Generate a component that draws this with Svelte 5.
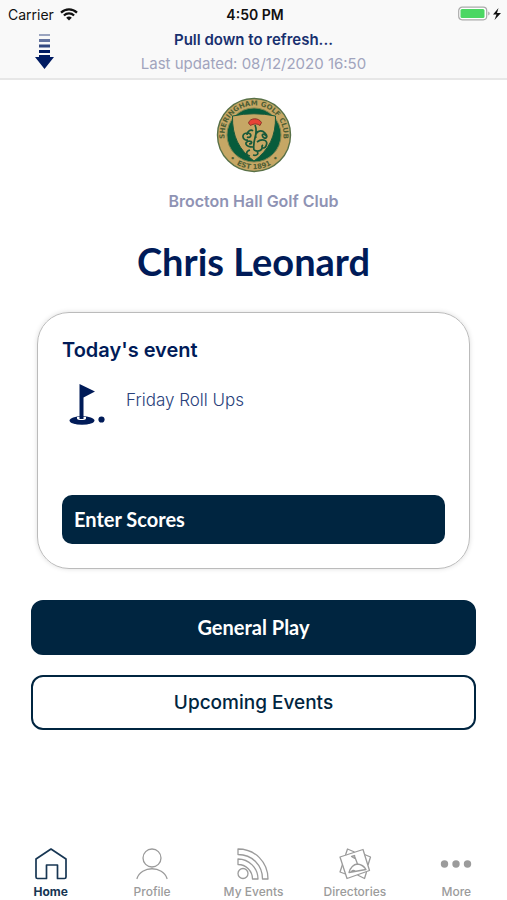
<script>
  const tabs = ['Home', 'Profile', 'My Events', 'Directories', 'More'];
  let active = $state('Home');
</script>

<div class="app">
  <header>
    <div class="status">
      <div class="carrier">
        <span>Carrier</span>
        <svg width="18" height="13" viewBox="0 0 18 13" fill="none" stroke="#111" stroke-width="2.2" aria-hidden="true">
          <path d="M1 4.6C5.5.2 12.5.2 17 4.6M3.9 7.5c2.900-2.900 7.300-2.900 10.200 0" />
          <path d="M9 12.600 6.200 9.800c1.600-1.600 4-1.600 5.600 0Z" fill="#111" stroke="none" />
        </svg>
      </div>
      <strong>4:50 PM</strong>
      <div class="power">
        <svg width="44" height="16" viewBox="0 0 44 16" aria-hidden="true">
          <rect x=".7" y="1.2" width="28" height="12.6" rx="3.5" fill="#fff" stroke="#aaa" stroke-width="1.2" />
          <rect x="2.5" y="3" width="24" height="9" rx="1.5" fill="#4bd763" />
          <path d="M30.2 5.5v4c2-.7 2-3.300 0-4Z" fill="#aaa" />
          <path d="m40.500 2-5.500 6.500h3.500L36.500 14 43 7h-4Z" fill="#111" />
        </svg>
      </div>
    </div>
    <div class="refresh">
      <svg class="arrow" width="20" height="37" viewBox="0 0 20 37" fill="#001b62" aria-hidden="true">
        <path d="M5 1h11v2H5Z" opacity=".38" />
        <path d="M5 6h11v3H5Z" opacity=".6" />
        <path d="M5 11.500h11v3H5Z" opacity=".8" />
        <path d="M5 17h11v3H5Z" />
        <path d="M5 22h11v2h4L10.500 36 1 24h4Z" />
      </svg>
      <div class="messages">
        <p class="pull">Pull down to refresh...</p>
        <p class="updated">Last updated: 08/12/2020 16:50</p>
      </div>
    </div>
  </header>

  <main>
    <svg class="crest" width="76" height="76" viewBox="0 0 76 76" role="img" aria-label="Sheringham Golf Club, est. 1891">
      <defs>
        <path id="ring-top" d="M17.100 58.900A29.500 29.500 0 1 1 58.900 58.900" />
        <path id="ring-bottom" d="M5.600 48.500A34 34 0 0 0 70.400 48.500" />
      </defs>
      <circle cx="38" cy="38" r="36.500" fill="#c6a765" stroke="#587047" stroke-width="1.400" />
      <circle cx="38" cy="38" r="27" fill="#075c3c" stroke="#7d8450" />
      <text><textPath href="#ring-top" startOffset="50%" text-anchor="middle">SHERINGHAM GOLF CLUB</textPath></text>
      <text><textPath href="#ring-bottom" startOffset="50%" text-anchor="middle">•  EST 1891  •</textPath></text>
      <path d="M16.500 19Q38 14.500 59.500 19C60 39 53 53 38 64 23 53 16 39 16.500 19Z" fill="#c6a765" stroke="#17593b" />
      <path d="M32.500 26c1-5 10-6 13-.5l-1.500 3c-3-2-6-2-9.500 0Z" fill="#e84236" stroke="#8a3928" />
      <path d="M39 28c4 9-3 14-1 25M37 50c-8 0-9-5-4-6 4 0 3 3 0 3M32 43c-6 1-7-7-1-7s4 6 0 4M39 42c0-8 6-10 10-6s0 7-2 4 1-4 3-1M41 45c5-4 12-2 9 4-2 4-6 1-3-1M38 53c4 2 9 1 8-4M34 53c-4 1-5 5 0 6M31 38c0-4 4-6 6-4M44 34c-4 0-5 4-4 7M37 58c4 1 6-1 4-4" fill="none" stroke="#17593b" stroke-width="1.700" />
    </svg>
    <p class="club">Brocton Hall Golf Club</p>
    <h1>Chris Leonard</h1>

    <section class="card">
      <h2>Today's event</h2>
      <div class="event">
        <svg width="38" height="44" viewBox="0 0 38 44" fill="#001b58" aria-hidden="true">
          <ellipse cx="13" cy="37.500" rx="12.500" ry="4.300" />
          <path d="M8 34v1.500c0 2 9 2 9 0V34Z" fill="#fff" />
          <path d="M10.500 1 26 8.500 14.500 14.500V36h-4Z" />
          <circle cx="32.500" cy="36.500" r="3.100" />
        </svg>
        <span>Friday Roll Ups</span>
      </div>
      <button class="scores">Enter Scores</button>
    </section>

    <div class="actions">
      <button class="general">General Play</button>
      <button class="upcoming">Upcoming Events</button>
    </div>
  </main>

  <nav aria-label="Main">
    {#each tabs as tab}
      <button class:active={active === tab} aria-current={active === tab ? 'page' : undefined} onclick={() => (active = tab)}>
        <svg width="36" height="36" viewBox="0 0 36 36" fill="none" stroke="currentColor" stroke-width="1.300" stroke-linejoin="round" aria-hidden="true">
          {#if tab === 'Home'}
            <path stroke-width="1.700" d="M3 13 18 3l15 10v18q0 1.500-1.500 1.500h-7V19h-11v13.500h-9Q3 32.500 3 31Z" />
          {:else if tab === 'Profile'}
            <circle cx="18" cy="12" r="9" />
            <path stroke-linecap="round" d="M3 32.500c4-13 26-13 30 0" />
          {:else if tab === 'My Events'}
            <circle cx="8" cy="27.500" r="5" />
            <path d="M3 3v5.500C17 8.500 27.500 19 27.500 33H33C33 16 20 3 3 3ZM3 13v5.500c8 0 14.500 6.500 14.500 14.500H23C23 22 14 13 3 13Z" />
          {:else if tab === 'Directories'}
            <path d="m3 11 23-7.500 6.500 21L10 32.500Z" />
            <path d="m8.500 9 2-6 7 3M27.500 8.500 33.500 11l-2.500 8M29.500 26l-2 6.500-7-3.500M8.500 28 3 26l2.500-7.500" />
            <path d="M12 26.500c1.500-5 4.500-8 8.500-8.500 4 .5 6.500 2 8.500 5.500ZM20.500 18l-3-8M17.800 12.500l-3.300-2 3.700-1M14 26c1-2 3-2 4-1" />
          {:else}
            <g fill="currentColor" stroke="none"><circle cx="6.500" cy="18" r="3.700" /><circle cx="18" cy="18" r="3.700" /><circle cx="29.500" cy="18" r="3.700" /></g>
          {/if}
        </svg>
        <span>{tab}</span>
      </button>
    {/each}
  </nav>
</div>

<style>
  :global(body) { margin: 0; background: #fff; }
  .app { min-height: 100vh; display: flex; flex-direction: column; font-family: Inter, Roboto, sans-serif; color: #001b62; }
  * { box-sizing: border-box; }
  p, h1, h2 { margin: 0; }
  button { font: inherit; cursor: pointer; }
  header { height: 80px; background: #f9f9f9; border-bottom: 2px solid #e7e7e7; }
  .status { display: grid; grid-template-columns: 1fr auto 1fr; align-items: center; height: 28px; padding: 0 5px 0 8px; font-size: 14px; color: #111; }
  .status strong { font-weight: 600; }
  .carrier { display: flex; align-items: center; gap: 6px; }
  .carrier svg, .power svg { display: block; }
  .power { display: flex; justify-content: flex-end; }
  .refresh { display: grid; grid-template-columns: 1fr auto 1fr; padding: 0 24px; }
  .arrow { margin: 5px 0 0 10px; }
  .messages { text-align: center; font-size: 15px; line-height: 24px; }
  .pull { font-weight: 600; color: #18306f; }
  .updated { color: #a1a4bd; }
  main { flex: 1; display: flex; flex-direction: column; align-items: center; padding: 17px 31px 24px; }
  .crest text { font-family: "DejaVu Sans", sans-serif; font-size: 7px; font-weight: bold; fill: #4e5e34; white-space: pre; }
  .club { margin-top: 16px; font-size: 16px; line-height: 24px; font-weight: 600; color: #8f93b4; }
  h1 { margin-top: 24px; font-family: Lato, sans-serif; font-size: 38px; line-height: 48px; font-weight: 700; color: #001b58; }
  .card { width: calc(100% - 12px); height: 257px; display: flex; flex-direction: column; margin-top: 27px; padding: 24px; border: 1px solid #bbb; border-radius: 32px; box-shadow: 0 0 5px #0002; }
  h2 { font-size: 20px; line-height: 26px; font-weight: 600; color: #001b58; }
  .event { display: flex; gap: 19px; margin: 20px 0 0 7px; font-size: 17px; line-height: 34px; font-weight: 300; color: #29417b; }
  .scores { height: 49px; margin-top: auto; padding: 0 12px 2px; border: 0; border-radius: 10px; background: #002540; color: #fff; text-align: left; font-family: Lato, sans-serif; font-size: 20px; font-weight: 700; }
  .actions { width: 100%; display: grid; gap: 20px; margin-top: 31px; }
  .actions button { height: 55px; border: 2px solid #002540; border-radius: 12px; font-size: 19px; }
  .actions .general { padding-bottom: 2px; background: #002540; color: #fff; font-family: Lato, sans-serif; font-size: 20px; font-weight: 700; }
  .actions .upcoming { background: #fff; color: #002540; font-weight: 500; }
  nav { display: grid; grid-template-columns: repeat(5, 1fr); }
  nav button { display: flex; flex-direction: column; align-items: center; gap: 2px; padding: 0; border: 0; background: none; color: #9b9b9b; font-size: 12px; line-height: 16px; font-weight: 500; }
  nav button.active { color: #173653; font-weight: 700; }
</style>
